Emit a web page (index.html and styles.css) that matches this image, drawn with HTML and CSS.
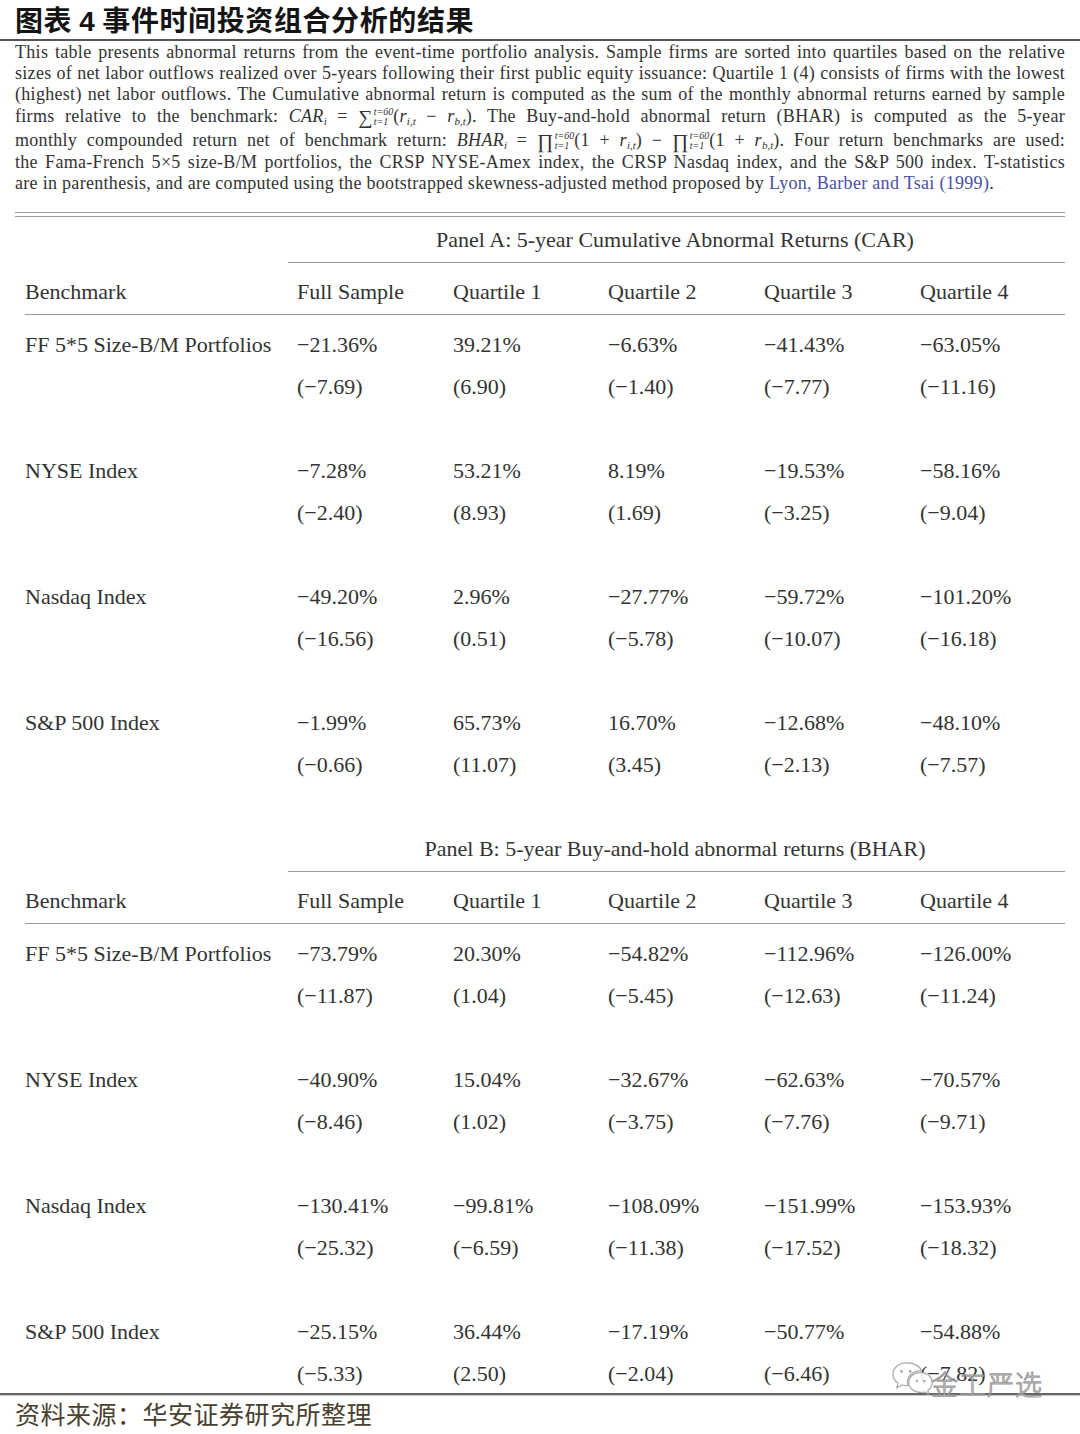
FILE: index.html
```html
<!DOCTYPE html>
<html lang="zh-CN">
<head>
<meta charset="utf-8">
<title>图表 4 事件时间投资组合分析的结果</title>
<link rel="stylesheet" href="styles.css">
</head>
<body>
<div class="page">
  <h1 class="title">图表 <span class="num">4</span> 事件时间投资组合分析的结果</h1>

  <div class="desc">
    <div class="ln">This table presents abnormal returns from the event-time portfolio analysis. Sample firms are sorted into quartiles based on the relative</div>
    <div class="ln">sizes of net labor outflows realized over 5-years following their first public equity issuance: Quartile 1 (4) consists of firms with the lowest</div>
    <div class="ln">(highest) net labor outflows. The Cumulative abnormal return is computed as the sum of the monthly abnormal returns earned by sample</div>
    <div class="ln tall">firms relative to the benchmark: <i>CAR<sub>i</sub></i> = <span class="op">&sum;<span class="lim"><span>t=60</span><span>t=1</span></span></span>(<i>r</i><sub><i>i,t</i></sub> &minus; <i>r</i><sub><i>b,t</i></sub>). The Buy-and-hold abnormal return (BHAR) is computed as the 5-year</div>
    <div class="ln tall">monthly compounded return net of benchmark return: <i>BHAR<sub>i</sub></i> = <span class="op">&prod;<span class="lim"><span>t=60</span><span>t=1</span></span></span>(1 + <i>r</i><sub><i>i,t</i></sub>) &minus; <span class="op">&prod;<span class="lim"><span>t=60</span><span>t=1</span></span></span>(1 + <i>r</i><sub><i>b,t</i></sub>). Four return benchmarks are used:</div>
    <div class="ln">the Fama-French 5&times;5 size-B/M portfolios, the CRSP NYSE-Amex index, the CRSP Nasdaq index, and the S&amp;P 500 index. T-statistics</div>
    <div class="ln last">are in parenthesis, and are computed using the bootstrapped skewness-adjusted method proposed by <span class="cite">Lyon, Barber and Tsai (1999)</span>.</div>
  </div>

  <div class="tbl">
    <div class="dbl"></div>

    <div class="ptitle">Panel A: 5-year Cumulative Abnormal Returns (CAR)</div>
    <div class="cmid"></div>
    <div class="row hdr"><span>Benchmark</span><span>Full Sample</span><span>Quartile 1</span><span>Quartile 2</span><span>Quartile 3</span><span>Quartile 4</span></div>
    <div class="hrule"></div>
    <div class="body">
      <div class="row"><span>FF 5*5 Size-B/M Portfolios</span><span>&minus;21.36%</span><span>39.21%</span><span>&minus;6.63%</span><span>&minus;41.43%</span><span>&minus;63.05%</span></div>
      <div class="row"><span></span><span>(&minus;7.69)</span><span>(6.90)</span><span>(&minus;1.40)</span><span>(&minus;7.77)</span><span>(&minus;11.16)</span></div>
      <div class="row blank"></div>
      <div class="row"><span>NYSE Index</span><span>&minus;7.28%</span><span>53.21%</span><span>8.19%</span><span>&minus;19.53%</span><span>&minus;58.16%</span></div>
      <div class="row"><span></span><span>(&minus;2.40)</span><span>(8.93)</span><span>(1.69)</span><span>(&minus;3.25)</span><span>(&minus;9.04)</span></div>
      <div class="row blank"></div>
      <div class="row"><span>Nasdaq Index</span><span>&minus;49.20%</span><span>2.96%</span><span>&minus;27.77%</span><span>&minus;59.72%</span><span>&minus;101.20%</span></div>
      <div class="row"><span></span><span>(&minus;16.56)</span><span>(0.51)</span><span>(&minus;5.78)</span><span>(&minus;10.07)</span><span>(&minus;16.18)</span></div>
      <div class="row blank"></div>
      <div class="row"><span>S&amp;P 500 Index</span><span>&minus;1.99%</span><span>65.73%</span><span>16.70%</span><span>&minus;12.68%</span><span>&minus;48.10%</span></div>
      <div class="row"><span></span><span>(&minus;0.66)</span><span>(11.07)</span><span>(3.45)</span><span>(&minus;2.13)</span><span>(&minus;7.57)</span></div>
      <div class="row blank"></div>
    </div>

    <div class="ptitle">Panel B: 5-year Buy-and-hold abnormal returns (BHAR)</div>
    <div class="cmid"></div>
    <div class="row hdr"><span>Benchmark</span><span>Full Sample</span><span>Quartile 1</span><span>Quartile 2</span><span>Quartile 3</span><span>Quartile 4</span></div>
    <div class="hrule"></div>
    <div class="body">
      <div class="row"><span>FF 5*5 Size-B/M Portfolios</span><span>&minus;73.79%</span><span>20.30%</span><span>&minus;54.82%</span><span>&minus;112.96%</span><span>&minus;126.00%</span></div>
      <div class="row"><span></span><span>(&minus;11.87)</span><span>(1.04)</span><span>(&minus;5.45)</span><span>(&minus;12.63)</span><span>(&minus;11.24)</span></div>
      <div class="row blank"></div>
      <div class="row"><span>NYSE Index</span><span>&minus;40.90%</span><span>15.04%</span><span>&minus;32.67%</span><span>&minus;62.63%</span><span>&minus;70.57%</span></div>
      <div class="row"><span></span><span>(&minus;8.46)</span><span>(1.02)</span><span>(&minus;3.75)</span><span>(&minus;7.76)</span><span>(&minus;9.71)</span></div>
      <div class="row blank"></div>
      <div class="row"><span>Nasdaq Index</span><span>&minus;130.41%</span><span>&minus;99.81%</span><span>&minus;108.09%</span><span>&minus;151.99%</span><span>&minus;153.93%</span></div>
      <div class="row"><span></span><span>(&minus;25.32)</span><span>(&minus;6.59)</span><span>(&minus;11.38)</span><span>(&minus;17.52)</span><span>(&minus;18.32)</span></div>
      <div class="row blank"></div>
      <div class="row"><span>S&amp;P 500 Index</span><span>&minus;25.15%</span><span>36.44%</span><span>&minus;17.19%</span><span>&minus;50.77%</span><span>&minus;54.88%</span></div>
      <div class="row"><span></span><span>(&minus;5.33)</span><span>(2.50)</span><span>(&minus;2.04)</span><span>(&minus;6.46)</span><span>(&minus;7.82)</span></div>
    </div>
  </div>

  <div class="botrule"></div>
  <div class="source">资料来源：华安证券研究所整理</div>

  <div class="watermark">
    <svg class="wx" width="44" height="42" viewBox="0 0 46 44">
      <path d="M16 3C8 3 2 8.5 2 15c0 3.8 2 7 5.2 9.2L6 29l5.3-2.8c1.5.4 3 .6 4.7.6 .6 0 1.2 0 1.8-.1-.4-1.1-.6-2.3-.6-3.5 0-6.7 6.2-12 13.9-12h.8C30.5 6.7 24 3 16 3z" fill="#fff" stroke="#a0a0a0" stroke-width="1.3"/>
      <circle cx="11" cy="12" r="1.5" fill="#a0a0a0"/>
      <circle cx="20" cy="12" r="1.5" fill="#a0a0a0"/>
      <path d="M31 13c-7 0-12.5 4.7-12.5 10.5S24 34 31 34c1.4 0 2.7-.2 3.9-.5L39.5 36l-1-4c2.8-1.9 4.5-4.9 4.5-8.5C43 17.7 37.9 13 31 13z" fill="#fff" stroke="#a0a0a0" stroke-width="1.3"/>
      <circle cx="27" cy="22" r="1.3" fill="#a0a0a0"/>
      <circle cx="35" cy="22" r="1.3" fill="#a0a0a0"/>
    </svg>
    <span class="wtext">金工严选</span>
  </div>
</div>
</body>
</html>
```

FILE: styles.css
```css
html, body {
  margin: 0;
  padding: 0;
  background: #ffffff;
}

.page {
  position: relative;
  width: 1080px;
  height: 1434px;
  overflow: hidden;
  color: #333333;
}

.title {
  margin: 0;
  height: 39px;
  padding-left: 15px;
  font-family: "Noto Sans CJK SC", sans-serif;
  font-weight: 700;
  font-size: 28px;
  line-height: 38px;
  color: #141414;
  border-bottom: 2px solid #555555;
  box-sizing: content-box;
  letter-spacing: 0.6px;
}

.title .num {
  font-family: "Liberation Sans", "Noto Sans CJK SC", sans-serif;
  font-weight: 700;
}

.desc {
  margin: 1px 15px 0 15px;
  font-family: "Liberation Serif", serif;
  font-size: 18px;
  letter-spacing: 0.3px;
  color: #333333;
}

.desc .ln {
  height: 21px;
  line-height: 21px;
  text-align: justify;
  text-align-last: justify;
  white-space: nowrap;
}

.desc .ln.tall {
  height: 23.5px;
  line-height: 23.5px;
}

.desc .ln.last {
  text-align-last: left;
}

.desc i {
  font-style: italic;
}

.desc sub {
  font-size: 11px;
  vertical-align: -3px;
  line-height: 0;
  letter-spacing: 0;
}

.op {
  display: inline-flex;
  align-items: center;
  line-height: 1;
  font-size: 20px;
  vertical-align: -2px;
}

.lim {
  display: inline-flex;
  flex-direction: column;
  font-size: 10px;
  line-height: 10px;
  font-style: italic;
  letter-spacing: 0;
  margin-left: 1px;
  vertical-align: middle;
}

.cite {
  color: #4a4fa3;
}

.tbl {
  margin: 18px 0 0 15px;
  width: 1050px;
  font-family: "Liberation Serif", serif;
  font-size: 22px;
  color: #333333;
}

.dbl {
  height: 3px;
  border-top: 1px solid #9a9a9a;
  border-bottom: 1px solid #9a9a9a;
}

.ptitle {
  height: 45px;
  line-height: 46px;
  padding-left: 282px;
  padding-right: 12px;
  text-align: center;
}

.cmid {
  margin-left: 273px;
  border-top: 1px solid #9a9a9a;
}

.hrule {
  margin-left: 10px;
  border-top: 1px solid #9a9a9a;
}

.row {
  display: grid;
  grid-template-columns: 272px 156px 155px 156px 156px 1fr;
  box-sizing: border-box;
  padding-left: 10px;
  padding-top: 4px;
  height: 42px;
  line-height: 38px;
  white-space: nowrap;
}

.row.hdr {
  height: 51px;
  padding-top: 7px;
  line-height: 44px;
}

.body {
  padding-top: 7px;
}

.botrule {
  height: 2px;
  background: #666666;
  border-bottom: 1px solid #cccccc;
}

.source {
  padding-left: 15px;
  height: 36px;
  line-height: 34px;
  font-family: "Noto Sans CJK SC", sans-serif;
  font-size: 25px;
  letter-spacing: 0.5px;
  color: #4a402e;
}

.watermark {
  position: absolute;
  left: 891px;
  top: 1358px;
  display: flex;
  align-items: center;
  opacity: 0.9;
}

.wx {
  display: block;
}

.wtext {
  font-family: "Noto Sans CJK SC", sans-serif;
  font-size: 27px;
  font-weight: 300;
  color: rgba(255, 255, 255, 0.85);
  -webkit-text-stroke: 1px #8f8f8f;
  letter-spacing: 1px;
  margin-top: 6px;
  margin-left: -4px;
}
```
